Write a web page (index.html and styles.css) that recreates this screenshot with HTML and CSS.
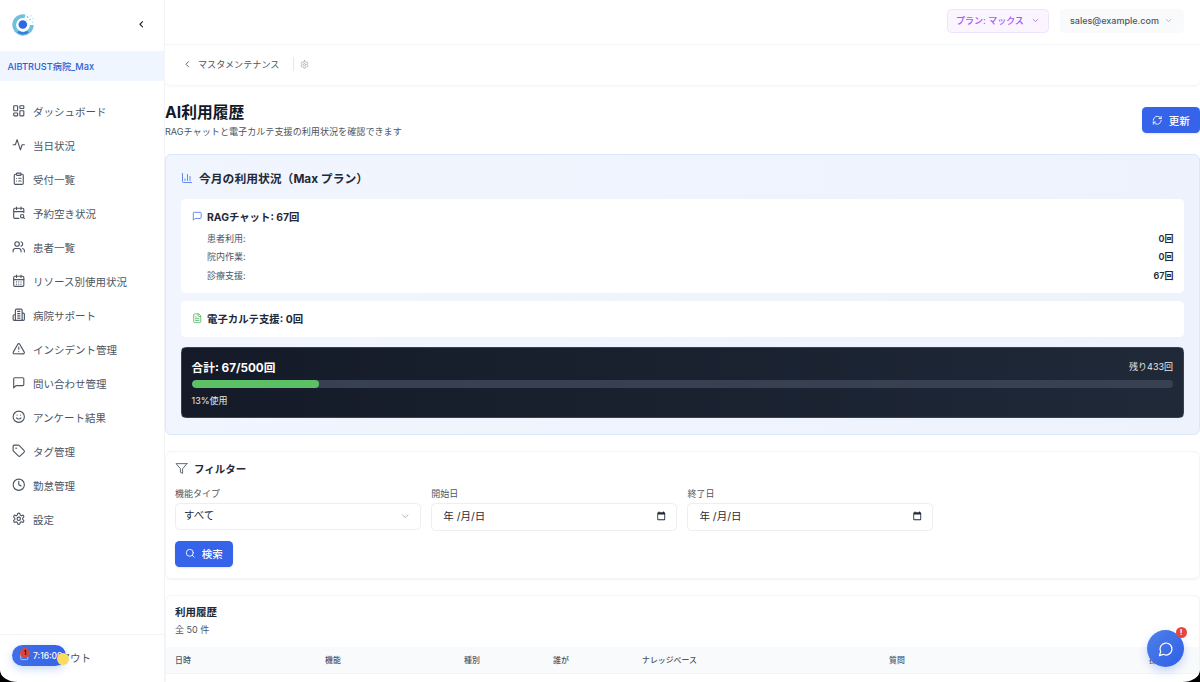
FILE: index.html
```html
<!DOCTYPE html>
<html lang="ja">
<head>
<meta charset="utf-8">
<title>AI利用履歴</title>
<link rel="stylesheet" href="styles.css">
</head>
<body>
<svg class="defs" aria-hidden="true">
  <symbol id="i-dash" viewBox="0 0 24 24"><rect x="3" y="3" width="7" height="9" rx="1"/><rect x="14" y="3" width="7" height="5" rx="1"/><rect x="14" y="12" width="7" height="9" rx="1"/><rect x="3" y="16" width="7" height="5" rx="1"/></symbol>
  <symbol id="i-activity" viewBox="0 0 24 24"><path d="M22 12h-4l-3 9L9 3l-3 9H2"/></symbol>
  <symbol id="i-clip" viewBox="0 0 24 24"><rect x="8" y="2" width="8" height="4" rx="1"/><path d="M16 4h2a2 2 0 0 1 2 2v14a2 2 0 0 1-2 2H6a2 2 0 0 1-2-2V6a2 2 0 0 1 2-2h2M12 11h4M12 16h4M8 11h.01M8 16h.01"/></symbol>
  <symbol id="i-calsearch" viewBox="0 0 24 24"><path d="M16 2v4M21 11.75V6a2 2 0 0 0-2-2H5a2 2 0 0 0-2 2v14a2 2 0 0 0 2 2h7.25M22 22l-1.875-1.875M3 10h18M8 2v4"/><circle cx="18" cy="18" r="3"/></symbol>
  <symbol id="i-users" viewBox="0 0 24 24"><path d="M16 21v-2a4 4 0 0 0-4-4H6a4 4 0 0 0-4 4v2M22 21v-2a4 4 0 0 0-3-3.87M16 3.13a4 4 0 0 1 0 7.75"/><circle cx="9" cy="7" r="4"/></symbol>
  <symbol id="i-caldays" viewBox="0 0 24 24"><path d="M8 2v4M16 2v4M3 10h18M8 14h.01M12 14h.01M16 14h.01M8 18h.01M12 18h.01M16 18h.01"/><rect x="3" y="4" width="18" height="18" rx="2"/></symbol>
  <symbol id="i-building" viewBox="0 0 24 24"><path d="M6 22V4a2 2 0 0 1 2-2h8a2 2 0 0 1 2 2v18ZM6 12H4a2 2 0 0 0-2 2v6a2 2 0 0 0 2 2h2M18 9h2a2 2 0 0 1 2 2v9a2 2 0 0 1-2 2h-2M10 6h4M10 10h4M10 14h4M10 18h4"/></symbol>
  <symbol id="i-alert" viewBox="0 0 24 24"><path d="m21.73 18-8-14a2 2 0 0 0-3.48 0l-8 14A2 2 0 0 0 4 21h16a2 2 0 0 0 1.73-3M12 9v4M12 17h.01"/></symbol>
  <symbol id="i-msg" viewBox="0 0 24 24"><path d="M21 15a2 2 0 0 1-2 2H7l-4 4V5a2 2 0 0 1 2-2h14a2 2 0 0 1 2 2z"/></symbol>
  <symbol id="i-smile" viewBox="0 0 24 24"><circle cx="12" cy="12" r="10"/><path d="M8 14s1.500 2 4 2 4-2 4-2M9 9h.01M15 9h.01"/></symbol>
  <symbol id="i-tag" viewBox="0 0 24 24"><path d="M12.586 2.586A2 2 0 0 0 11.172 2H4a2 2 0 0 0-2 2v7.172a2 2 0 0 0 .586 1.414l8.704 8.704a2.426 2.426 0 0 0 3.420 0l6.580-6.580a2.426 2.426 0 0 0 0-3.420z"/><circle cx="7.500" cy="7.500" r=".5"/></symbol>
  <symbol id="i-clock" viewBox="0 0 24 24"><circle cx="12" cy="12" r="10"/><path d="M12 6v6l4 2"/></symbol>
  <symbol id="i-gear" viewBox="0 0 24 24"><path d="M12.220 2h-.44a2 2 0 0 0-2 2v.18a2 2 0 0 1-1 1.730l-.43.25a2 2 0 0 1-2 0l-.15-.08a2 2 0 0 0-2.730.73l-.22.38a2 2 0 0 0 .73 2.730l.15.1a2 2 0 0 1 1 1.720v.51a2 2 0 0 1-1 1.740l-.15.09a2 2 0 0 0-.73 2.730l.22.38a2 2 0 0 0 2.730.73l.15-.08a2 2 0 0 1 2 0l.43.25a2 2 0 0 1 1 1.730V20a2 2 0 0 0 2 2h.44a2 2 0 0 0 2-2v-.18a2 2 0 0 1 1-1.730l.43-.25a2 2 0 0 1 2 0l.15.08a2 2 0 0 0 2.730-.73l.22-.39a2 2 0 0 0-.73-2.730l-.15-.08a2 2 0 0 1-1-1.740v-.5a2 2 0 0 1 1-1.740l.15-.09a2 2 0 0 0 .73-2.730l-.22-.38a2 2 0 0 0-2.730-.73l-.15.08a2 2 0 0 1-2 0l-.43-.25a2 2 0 0 1-1-1.730V4a2 2 0 0 0-2-2z"/><circle cx="12" cy="12" r="3"/></symbol>
  <symbol id="i-refresh" viewBox="0 0 24 24"><path d="M3 12a9 9 0 0 1 9-9 9.750 9.750 0 0 1 6.740 2.740L21 8M21 3v5h-5M21 12a9 9 0 0 1-9 9 9.750 9.750 0 0 1-6.740-2.740L3 16M8 16H3v5"/></symbol>
  <symbol id="i-chart" viewBox="0 0 24 24"><path d="M3 3v16a2 2 0 0 0 2 2h16M18 17V9M13 17V5M8 17v-3"/></symbol>
  <symbol id="i-file" viewBox="0 0 24 24"><path d="M15 2H6a2 2 0 0 0-2 2v16a2 2 0 0 0 2 2h12a2 2 0 0 0 2-2V7ZM14 2v4a2 2 0 0 0 2 2h4M10 9H8M16 13H8M16 17H8"/></symbol>
  <symbol id="i-filter" viewBox="0 0 24 24"><path d="M22 3H2l8 9.460V19l4 2v-8.540L22 3z"/></symbol>
  <symbol id="i-search" viewBox="0 0 24 24"><circle cx="11" cy="11" r="8"/><path d="m21 21-4.300-4.300"/></symbol>
  <symbol id="i-chat" viewBox="0 0 24 24"><path d="M7.900 20A9 9 0 1 0 4 16.100L2 22Z"/></symbol>
  <symbol id="i-down" viewBox="0 0 24 24"><path d="m6 9 6 6 6-6"/></symbol>
  <symbol id="i-left" viewBox="0 0 24 24"><path d="m15 18-6-6 6-6"/></symbol>
  <symbol id="i-date" viewBox="0 0 24 24"><path d="M19 3h-1V1h-2v2H8V1H6v2H5a2 2 0 0 0-2 2v14a2 2 0 0 0 2 2h14a2 2 0 0 0 2-2V5a2 2 0 0 0-2-2zm0 16H5V8h14z"/></symbol>
</svg>

<div class="app">
  <aside class="sidebar">
    <div class="brand">
      <svg class="logo" viewBox="0 0 24 24" aria-hidden="true">
        <path class="logo-ring" d="M13 2.400A8.800 8.800 0 1 0 19.800 11"/>
        <circle class="logo-core" cx="10.800" cy="10.500" r="4.300"/>
        <path class="logo-base" d="M6 17.800Q11 21 16 17.800"/>
        <circle class="logo-dot" cx="15.500" cy="3" r=".9"/><circle class="logo-dot" cx="19" cy="1.800" r=".6"/>
        <circle class="logo-dot" cx="18" cy="5.500" r=".8"/><circle class="logo-dot" cx="21" cy="4.500" r=".6"/>
        <circle class="logo-dot" cx="15" cy="6.500" r=".5"/><circle class="logo-dot" cx="20.500" cy="8" r=".6"/>
      </svg>
      <svg class="ico collapse"><use href="#i-left"/></svg>
    </div>
    <div class="org">AIBTRUST病院_Max</div>
    <nav class="nav">
      <a class="nav-item"><svg class="ico"><use href="#i-dash"/></svg>ダッシュボード</a>
      <a class="nav-item"><svg class="ico"><use href="#i-activity"/></svg>当日状況</a>
      <a class="nav-item"><svg class="ico"><use href="#i-clip"/></svg>受付一覧</a>
      <a class="nav-item"><svg class="ico"><use href="#i-calsearch"/></svg>予約空き状況</a>
      <a class="nav-item"><svg class="ico"><use href="#i-users"/></svg>患者一覧</a>
      <a class="nav-item"><svg class="ico"><use href="#i-caldays"/></svg>リソース別使用状況</a>
      <a class="nav-item"><svg class="ico"><use href="#i-building"/></svg>病院サポート</a>
      <a class="nav-item"><svg class="ico"><use href="#i-alert"/></svg>インシデント管理</a>
      <a class="nav-item"><svg class="ico"><use href="#i-msg"/></svg>問い合わせ管理</a>
      <a class="nav-item"><svg class="ico"><use href="#i-smile"/></svg>アンケート結果</a>
      <a class="nav-item"><svg class="ico"><use href="#i-tag"/></svg>タグ管理</a>
      <a class="nav-item"><svg class="ico"><use href="#i-clock"/></svg>勤怠管理</a>
      <a class="nav-item"><svg class="ico"><use href="#i-gear"/></svg>設定</a>
    </nav>
    <div class="logout">ログアウト</div>
    <div class="timer">
      <svg class="ico timer-ico"><use href="#i-clip"/></svg>
      <span class="timer-badge">1</span>
      <span class="timer-text">7:16:09</span>
    </div>
    <span class="cursor-dot"></span>
  </aside>

  <div class="main">
    <header class="topbar">
      <button class="plan">プラン: マックス<svg class="ico"><use href="#i-down"/></svg></button>
      <button class="account">sales@example.com<svg class="ico"><use href="#i-down"/></svg></button>
    </header>

    <div class="crumbs">
      <svg class="ico"><use href="#i-left"/></svg>
      <span class="crumb-text">マスタメンテナンス</span>
      <span class="crumb-sep"></span>
      <svg class="ico crumb-gear"><use href="#i-gear"/></svg>
    </div>

    <section class="page-head">
      <div>
        <h1>AI利用履歴</h1>
        <p>RAGチャットと電子カルテ支援の利用状況を確認できます</p>
      </div>
      <button class="btn"><svg class="ico"><use href="#i-refresh"/></svg>更新</button>
    </section>

    <section class="usage">
      <h2><svg class="ico ico-blue"><use href="#i-chart"/></svg>今月の利用状況（Max プラン）</h2>
      <div class="usage-card">
        <h3><svg class="ico ico-blue"><use href="#i-msg"/></svg>RAGチャット: 67回</h3>
        <div class="usage-row first"><span>患者利用:</span><b>0回</b></div>
        <div class="usage-row"><span>院内作業:</span><b>0回</b></div>
        <div class="usage-row"><span>診療支援:</span><b>67回</b></div>
      </div>
      <div class="usage-card second">
        <h3><svg class="ico ico-green"><use href="#i-file"/></svg>電子カルテ支援: 0回</h3>
      </div>
      <div class="total">
        <div class="total-head"><strong>合計: 67/500回</strong><span>残り433回</span></div>
        <div class="meter"><div class="meter-fill" style="width:13%"></div></div>
        <div class="total-foot">13%使用</div>
      </div>
    </section>

    <section class="filter">
      <h3><svg class="ico"><use href="#i-filter"/></svg>フィルター</h3>
      <div class="filter-grid">
        <div class="field">機能タイプ
          <span class="select">すべて<svg class="ico"><use href="#i-down"/></svg></span>
        </div>
        <div class="field">開始日
          <span class="date">年 /月/日<svg class="date-ico"><use href="#i-date"/></svg></span>
        </div>
        <div class="field">終了日
          <span class="date">年 /月/日<svg class="date-ico"><use href="#i-date"/></svg></span>
        </div>
      </div>
      <button class="btn btn-search"><svg class="ico"><use href="#i-search"/></svg>検索</button>
    </section>

    <section class="history">
      <h3>利用履歴</h3>
      <p>全 50 件</p>
      <table>
        <colgroup><col class="c1"><col class="c2"><col class="c3"><col class="c4"><col class="c5"><col class="c6"><col></colgroup>
        <thead><tr><th>日時</th><th>機能</th><th>種別</th><th>誰が</th><th>ナレッジベース</th><th>質問</th><th>操作</th></tr></thead>
      </table>
    </section>
  </div>
</div>

<button class="fab"><svg class="ico"><use href="#i-chat"/></svg><span class="fab-badge">!</span></button>
<span class="corner corner-l"></span>
<span class="corner corner-r"></span>
</body>
</html>
```

FILE: styles.css
```css
* { box-sizing: border-box; }
html, body { margin: 0; height: 100%; overflow: hidden; background: #fff; }
body { font-family: Inter, "Noto Sans CJK JP", sans-serif; color: #111827; font-size: 10.5px; }
h1, h2, h3, p { margin: 0; }
button { font-family: inherit; border: 0; padding: 0; }
.defs { position: absolute; width: 0; height: 0; }
.ico { width: 13.5px; height: 13.5px; flex: none; fill: none; stroke: currentColor; stroke-width: 2; stroke-linecap: round; stroke-linejoin: round; }
.ico-blue { color: #4f7cec; }
.ico-green { color: #5cb86a; }

.app { display: flex; height: 682px; }

.sidebar { position: relative; width: 165px; flex: none; display: flex; flex-direction: column; background: #fff; border-right: 1px solid #f3f4f6; }
.brand { height: 51px; flex: none; display: flex; align-items: center; justify-content: space-between; padding: 0 18px 2px 12px; }
.logo { width: 24px; height: 24px; margin-top: 2px; fill: none; }
.logo-ring { fill: none; stroke: #6fc0de; stroke-width: 3.800; }
.logo-core { fill: #2f68e4; }
.logo-base { fill: none; stroke: #3a78e0; stroke-width: 2.200; }
.logo-dot { fill: #8ccbe6; }
.collapse { width: 10.5px; height: 10.5px; color: #1f2937; stroke-width: 2.5; }
.org { height: 30px; flex: none; display: flex; align-items: center; padding: 0 0 1px 7.5px; background: #eff6ff; color: #2f5dd0; font-size: 9.200px; font-weight: 500; }
.nav { flex: 1; padding-top: 13px; }
.nav-item { height: 34px; display: flex; align-items: center; gap: 7.500px; padding-left: 12px; color: #4b5563; font-size: 10.500px; }
.logout { height: 48px; flex: none; border-top: 1px solid #f3f4f6; display: flex; align-items: center; padding: 0 0 2px 38.500px; color: #4b5563; font-size: 10.500px; }
.timer { position: absolute; left: 12px; top: 645px; width: 54px; height: 21px; border-radius: 10.500px; background: linear-gradient(90deg, #3f6fe8, #3563e9); color: #fff; display: flex; align-items: center; padding-left: 7px; box-shadow: 0 3px 8px rgba(37, 99, 235, .25); overflow: hidden; }
.timer-ico { width: 10.500px; height: 10.500px; color: #c7d7fb; }
.timer-badge { position: absolute; left: 8px; top: 3px; width: 10px; height: 10px; border-radius: 50%; background: #d9453f; color: #111; font-size: 6px; font-weight: 700; line-height: 10px; text-align: center; }
.timer-text { margin-left: 3.500px; font-size: 8.500px; font-weight: 500; white-space: nowrap; }
.cursor-dot { position: absolute; left: 56.500px; top: 652.500px; width: 12.500px; height: 12.500px; border-radius: 50%; background: #fbdc5c; }

.main { flex: 1; min-width: 0; height: 682px; overflow: hidden; display: flex; flex-direction: column; }
.topbar { height: 45px; flex: none; display: flex; justify-content: flex-end; align-items: flex-start; gap: 11px; padding: 9px 16px 0 0; border-bottom: 1px solid #f3f4f6; }
.plan, .account { height: 24px; display: flex; align-items: center; padding-bottom: 1px; font-size: 9px; border-radius: 4.500px; }
.plan { width: 102px; padding-left: 8px; gap: 7px; background: #faf5ff; border: 1px solid #f0e4fd; color: #a855f7; font-weight: 500; }
.plan .ico { width: 9px; height: 9px; }
.account { width: 124px; padding-left: 10px; gap: 5.500px; background: #f9fafb; color: #4b5563; font-weight: 500; }
.account .ico { width: 9px; height: 9px; color: #9ca3af; }

.crumbs { height: 41px; flex: none; display: flex; align-items: center; padding: 0 0 2px 17px; border-bottom: 1px solid #f3f4f6; border-radius: 0 0 6px 6px; box-shadow: 0 1px 2px rgba(0, 0, 0, .03); color: #4b5563; font-size: 9.100px; }
.crumbs > .ico { width: 10.500px; height: 10.500px; }
.crumb-text { margin-left: 5.500px; }
.crumb-sep { width: 1px; height: 14px; margin: 0 6px 0 13.500px; background: #e5e7eb; }
.crumbs > .crumb-gear { width: 9px; height: 9px; color: #9ca3af; }

.page-head { flex: none; display: flex; justify-content: space-between; align-items: center; height: 36px; margin: 16px 0; }
h1 { padding-top: 1px; font-size: 15.750px; line-height: 21px; font-weight: 700; color: #111827; }
.page-head p { margin-top: 2px; font-size: 9.100px; line-height: 13.500px; color: #4b5563; }
.btn { display: inline-flex; align-items: center; justify-content: center; gap: 6px; width: 58px; height: 26px; background: #3563e9; color: #fff; font-size: 10.500px; font-weight: 500; border-radius: 4.500px; box-shadow: 0 1px 2px rgba(0, 0, 0, .1); }
.btn .ico { width: 10.500px; height: 10.500px; }

.usage { flex: none; height: 280.500px; padding: 13.500px 15px 15px; background: linear-gradient(90deg, #f0f5fe, #eef2fd); border: 1px solid #dbe7fb; border-radius: 6px; }
.usage h2 { display: flex; align-items: center; gap: 6px; height: 18px; font-size: 11.800px; font-weight: 700; color: #1f2937; margin-bottom: 12px; }
.usage h2 .ico { width: 12px; height: 12px; stroke-width: 1.800; }
.usage-card { background: #fff; border-radius: 4.500px; padding: 10.500px; margin-bottom: 8px; }
.usage-card h3 { display: flex; align-items: center; gap: 5px; height: 15px; font-size: 10.400px; font-weight: 700; color: #1f2937; }
.usage-card h3 .ico { width: 10.500px; height: 10.500px; }
.usage-row { display: flex; justify-content: space-between; height: 13.500px; line-height: 13.500px; margin-top: 5px; padding-left: 15.500px; font-size: 9px; color: #4b5563; }
.usage-row.first { margin-top: 7.500px; }
.usage-row b { font-weight: 600; color: #1f2937; }
.usage-card.second { margin-bottom: 10.500px; }
.total { height: 70.500px; padding: 9.500px 10px 9.500px 9.500px; border-radius: 4.500px; background: linear-gradient(90deg, #141a28, #1f2937); border: 1px solid #374151; color: #fff; }
.total-head { display: flex; justify-content: space-between; align-items: center; height: 18px; }
.total-head strong { font-size: 11.700px; font-weight: 700; }
.total-head span { font-size: 9px; color: #e5e7eb; }
.meter { height: 7.500px; margin-top: 4.500px; background: #374151; border-radius: 4px; overflow: hidden; }
.meter-fill { height: 100%; background: #5cc066; border-radius: 4px; }
.total-foot { margin-top: 6.500px; line-height: 13.500px; font-size: 9px; color: #e5e7eb; }

.filter { flex: none; height: 128.500px; margin-top: 16px; padding: 9.500px 9.500px 9.500px 9px; border: 1px solid #f3f4f6; border-radius: 6px; box-shadow: 0 1px 2px rgba(0, 0, 0, .05); }
.filter h3 { display: flex; align-items: center; gap: 6px; height: 15px; font-size: 10.500px; font-weight: 700; color: #1f2937; }
.filter h3 .ico { width: 13px; height: 13px; color: #4b5563; stroke-width: 1.600; }
.filter-grid { display: grid; grid-template-columns: repeat(4, 1fr); gap: 10.300px; margin-top: 10.500px; }
.field { display: flex; flex-direction: column; gap: 2.500px; line-height: 13.500px; font-size: 9px; color: #4b5563; }
.select { height: 27px; display: flex; align-items: center; justify-content: space-between; padding: 0 9px 0 8px; background: #fff; border: 1px solid #edeef1; border-radius: 4.500px; font-size: 10.500px; color: #1f2937; }
.select .ico { width: 10.500px; height: 10.500px; color: #9ca3af; }
.date { height: 28px; display: flex; align-items: center; justify-content: space-between; padding: 0 10px 0 11px; border: 1px solid #edeef1; border-radius: 4.500px; background: #fff; font-size: 10.500px; color: #1f2937; }
.date-ico { width: 10.500px; height: 10.500px; fill: #1f2937; }
.btn-search { margin-top: 10px; }

.history { flex: 1; min-height: 0; margin-top: 16px; padding-top: 9px; border: 1px solid #f3f4f6; border-bottom: 0; border-radius: 6px 6px 0 0; box-shadow: 0 1px 2px rgba(0, 0, 0, .05); }
.history h3 { padding-left: 9px; height: 15px; line-height: 15px; font-size: 10.500px; font-weight: 700; color: #1f2937; }
.history p { padding-left: 9px; margin-top: 3px; height: 13.500px; line-height: 13.500px; font-size: 9px; color: #4b5563; }
table { width: 100%; margin-top: 10px; border-collapse: collapse; table-layout: fixed; }
.c1 { width: 150px; }
.c2 { width: 139px; }
.c3, .c4 { width: 89px; }
.c5 { width: 247px; }
.c6 { width: 260px; }
th { height: 27px; padding: 0 0 0 9px; background: #f9fafb; border-bottom: 1px solid #f3f4f6; text-align: left; font-size: 7.900px; font-weight: 500; color: #4b5563; }

.fab { position: absolute; left: 1147px; top: 630px; width: 37px; height: 37px; display: flex; align-items: center; justify-content: center; border-radius: 50%; background: linear-gradient(135deg, #4d80ea, #2f5fe6); color: #fff; box-shadow: 0 4px 10px rgba(37, 99, 235, .25); }
.fab .ico { width: 16px; height: 16px; stroke-width: 1.800; }
.fab-badge { position: absolute; left: 28.500px; top: -3px; width: 11px; height: 11px; border-radius: 50%; background: #e2483f; color: #fff; font-size: 8px; font-weight: 700; line-height: 11px; text-align: center; }

.corner { position: absolute; bottom: 0; width: 18px; height: 12px; overflow: hidden; }
.corner::before { content: ""; position: absolute; bottom: 0; width: 36px; height: 24px; box-shadow: 0 0 0 24px #000; }
.corner-l { left: 0; }
.corner-l::before { left: 0; border-radius: 0 0 0 18px / 0 0 0 12px; }
.corner-r { right: 0; }
.corner-r::before { right: 0; border-radius: 0 0 18px 0 / 0 0 12px 0; }
```
